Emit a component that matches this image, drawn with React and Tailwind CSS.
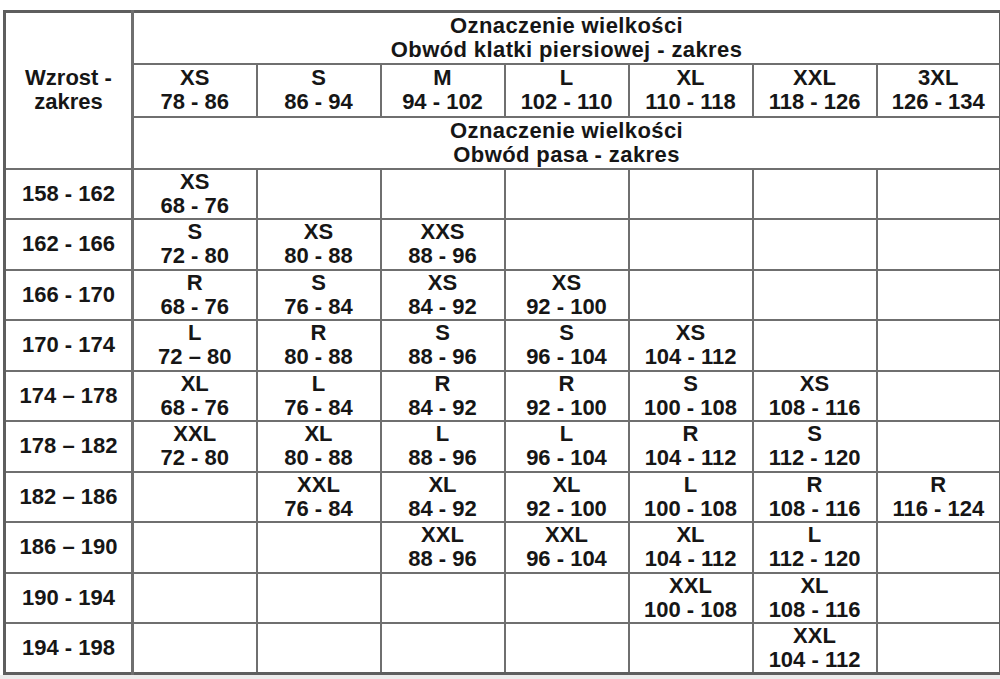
import React from "react";

const sizes = [
  ["XS", "78 - 86"],
  ["S", "86 - 94"],
  ["M", "94 - 102"],
  ["L", "102 - 110"],
  ["XL", "110 - 118"],
  ["XXL", "118 - 126"],
  ["3XL", "126 - 134"],
];

const rows = [
  ["158 - 162", [["XS", "68 - 76"]]],
  ["162 - 166", [["S", "72 - 80"], ["XS", "80 - 88"], ["XXS", "88 - 96"]]],
  ["166 - 170", [["R", "68 - 76"], ["S", "76 - 84"], ["XS", "84 - 92"], ["XS", "92 - 100"]]],
  ["170 - 174", [["L", "72 – 80"], ["R", "80 - 88"], ["S", "88 - 96"], ["S", "96 - 104"], ["XS", "104 - 112"]]],
  ["174 – 178", [["XL", "68 - 76"], ["L", "76 - 84"], ["R", "84 - 92"], ["R", "92 - 100"], ["S", "100 - 108"], ["XS", "108 - 116"]]],
  ["178 – 182", [["XXL", "72 - 80"], ["XL", "80 - 88"], ["L", "88 - 96"], ["L", "96 - 104"], ["R", "104 - 112"], ["S", "112 - 120"]]],
  ["182 – 186", [null, ["XXL", "76 - 84"], ["XL", "84 - 92"], ["XL", "92 - 100"], ["L", "100 - 108"], ["R", "108 - 116"], ["R", "116 - 124"]]],
  ["186 – 190", [null, null, ["XXL", "88 - 96"], ["XXL", "96 - 104"], ["XL", "104 - 112"], ["L", "112 - 120"]]],
  ["190 - 194", [null, null, null, null, ["XXL", "100 - 108"], ["XL", "108 - 116"]]],
  ["194 - 198", [null, null, null, null, null, ["XXL", "104 - 112"]]],
];

const cell = "border-2 border-[#6f6f6f] text-center align-middle p-0";

function Pair({ value }) {
  if (!value) return null;
  return (
    <>
      <div>{value[0]}</div>
      <div>{value[1]}</div>
    </>
  );
}

export default function App() {
  return (
    <div
      className="h-[679px] w-[1000px] bg-white flex flex-col text-[#161616]"
      style={{ fontFamily: '"Liberation Sans", Arial, sans-serif' }}
    >
      <div className="pt-[10px] pl-[3px]">
        <table className="table-fixed border-collapse border-[3px] border-[#5e5e5e] w-[995px] font-bold text-[22px] leading-[24px]">
          <colgroup>
            <col className="w-[128px]" />
            {sizes.map((s) => (
              <col key={s[0]} className="w-[124px]" />
            ))}
          </colgroup>
          <tbody>
            <tr className="h-[52px]">
              <td rowSpan={3} className={cell + " border-r-[3px]"}>
                <div>Wzrost -</div>
                <div>zakres</div>
              </td>
              <td colSpan={7} className={cell + " tracking-[0.4px]"}>
                <div>Oznaczenie wielkości</div>
                <div>Obwód klatki piersiowej - zakres</div>
              </td>
            </tr>
            <tr className="h-[53px]">
              {sizes.map((s) => (
                <td key={s[0]} className={cell}>
                  <Pair value={s} />
                </td>
              ))}
            </tr>
            <tr className="h-[52px]">
              <td colSpan={7} className={cell + " tracking-[0.4px]"}>
                <div>Oznaczenie wielkości</div>
                <div>Obwód pasa - zakres</div>
              </td>
            </tr>
            {rows.map(([label, vals]) => (
              <tr key={label} className="h-[50.5px]">
                <td className={cell + " border-r-[3px]"}>{label}</td>
                {sizes.map((_, i) => (
                  <td key={i} className={cell}>
                    <Pair value={vals[i]} />
                  </td>
                ))}
              </tr>
            ))}
          </tbody>
        </table>
      </div>
      <div className="flex-1 bg-[#ececec]" />
    </div>
  );
}
